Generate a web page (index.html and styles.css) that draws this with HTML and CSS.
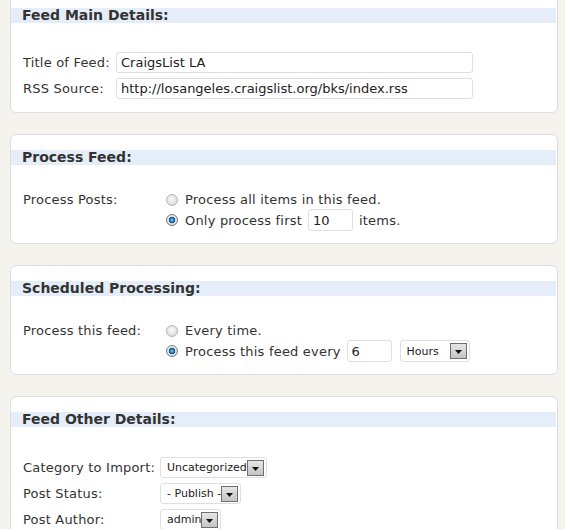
FILE: index.html
```html
<!DOCTYPE html>
<html>
<head>
<meta charset="utf-8">
<link rel="stylesheet" href="styles.css">
</head>
<body>
<div class="wrap">
  <div class="panel panel-first">
    <h3 class="band">Feed Main Details:</h3>
    <div class="rows rows-main gap-top-29">
      <div class="label">Title of Feed:</div>
      <div class="field"><input class="text wide" type="text" value="CraigsList LA"></div>
      <div class="label">RSS Source:</div>
      <div class="field"><input class="text wide" type="text" value="http://losangeles.craigslist.org/bks/index.rss"></div>
    </div>
  </div>

  <div class="panel panel-opts">
    <h3 class="band">Process Feed:</h3>
    <div class="rows rows-opts gap-top-25">
      <div class="label line1">Process Posts:</div>
      <div class="opts">
        <div class="opt line1"><input class="radio" type="radio" name="pp"><span>Process all items in this feed.</span></div>
        <div class="opt line2"><input class="radio" type="radio" name="pp" checked><span>Only process first</span><input class="text small" type="text" value="10"><span>items.</span></div>
      </div>
    </div>
  </div>

  <div class="panel panel-opts">
    <h3 class="band">Scheduled Processing:</h3>
    <div class="rows rows-opts gap-top-25">
      <div class="label line1">Process this feed:</div>
      <div class="opts">
        <div class="opt line1"><input class="radio" type="radio" name="sp"><span>Every time.</span></div>
        <div class="opt line2"><input class="radio" type="radio" name="sp" checked><span>Process this feed every</span><input class="text small" type="text" value="6"><span class="select sel-hours"><span class="sel-text">Hours</span><span class="sel-btn"><svg width="7" height="4" viewBox="0 0 7 4"><path d="M0 0h7L3.5 4z" fill="#111"/></svg></span></span></div>
      </div>
    </div>
  </div>

  <div class="panel">
    <h3 class="band">Feed Other Details:</h3>
    <div class="rows rows-other gap-top-30">
      <div class="label">Category to Import:</div>
      <div class="field"><span class="select"><span class="sel-text">Uncategorized</span><span class="sel-btn"><svg width="7" height="4" viewBox="0 0 7 4"><path d="M0 0h7L3.5 4z" fill="#111"/></svg></span></span></div>
      <div class="label">Post Status:</div>
      <div class="field"><span class="select"><span class="sel-text">- Publish -</span><span class="sel-btn"><svg width="7" height="4" viewBox="0 0 7 4"><path d="M0 0h7L3.5 4z" fill="#111"/></svg></span></span></div>
      <div class="label">Post Author:</div>
      <div class="field"><span class="select"><span class="sel-text">admin</span><span class="sel-btn"><svg width="7" height="4" viewBox="0 0 7 4"><path d="M0 0h7L3.5 4z" fill="#111"/></svg></span></span></div>
    </div>
  </div>
</div>
</body>
</html>
```

FILE: styles.css
```css
html, body {
  margin: 0;
  padding: 0;
  background: #f4f3ee;
  font-family: "DejaVu Sans", Verdana, sans-serif;
  font-size: 13px;
  color: #333;
}

.wrap {
  width: 548px;
  padding-left: 10px;
}

.panel {
  background: #fff;
  border: 1px solid #dedede;
  border-radius: 6px;
  padding: 15px 0 13px;
  margin-bottom: 21px;
}

.panel-first {
  margin-top: -8px;
}

.panel-opts {
  padding-bottom: 12px;
}

.band {
  margin: 0 1px 0 0;
  height: 15px;
  line-height: 15px;
  background: #e5eef8;
  font-size: 14px;
  font-weight: bold;
  color: #333;
  padding-left: 11px;
  white-space: nowrap;
}

.rows {
  display: grid;
  padding-left: 12px;
  align-items: center;
  letter-spacing: 0.2px;
}

.gap-top-25 { margin-top: 25px; }
.gap-top-29 { margin-top: 29px; }
.gap-top-30 { margin-top: 30px; }

.rows-main {
  grid-template-columns: 93px 1fr;
  row-gap: 5px;
}

.rows-other {
  grid-template-columns: 137px 1fr;
  row-gap: 5px;
}

.rows-opts {
  grid-template-columns: 143px 1fr;
  align-items: start;
}

.label {
  white-space: nowrap;
  line-height: 21px;
}

.rows-opts .label {
  line-height: 19px;
}

.field {
  display: flex;
  align-items: center;
}

.text {
  box-sizing: border-box;
  height: 21px;
  border: 1px solid #dfdfdf;
  border-radius: 3px;
  background: #fff;
  font-family: "DejaVu Sans", Verdana, sans-serif;
  font-size: 13px;
  letter-spacing: 0;
  color: #222;
  padding: 0 4px;
  margin: 0;
  outline: none;
}

.wide {
  width: 357px;
}

.small {
  width: 45px;
  height: 22px;
  margin: 0 6px 0 6px;
}

.opts {
  display: flex;
  flex-direction: column;
}

.opt {
  display: flex;
  align-items: center;
  white-space: nowrap;
}

.opt.line1 { height: 19px; }
.opt.line2 { height: 22px; }

.radio {
  appearance: none;
  -webkit-appearance: none;
  box-sizing: border-box;
  width: 12px;
  height: 12px;
  margin: 0 7px 0 0;
  border-radius: 50%;
  border: 1px solid #b4b4b4;
  background: radial-gradient(circle at 45% 40%, #fafafa 0%, #e4e4e4 55%, #cfcfcf 100%);
  flex: none;
}

.radio:checked {
  border-color: #7a7a7a;
  background:
    radial-gradient(circle at 50% 50%, #8ed0f5 0px, #1e74b4 2px, #0d4f86 3px, transparent 3.6px),
    radial-gradient(circle at 45% 40%, #fafafa 0%, #e2e2e2 60%, #c8c8c8 100%);
}

.select {
  box-sizing: border-box;
  display: inline-flex;
  align-items: center;
  height: 21px;
  border: 1px solid #dfdfdf;
  border-radius: 3px;
  background: #fff;
  padding: 0 2px 0 6px;
  font-size: 11px;
  letter-spacing: 0;
  color: #222;
}

.sel-hours {
  height: 22px;
  width: 70px;
  margin-left: 2px;
  padding-left: 6px;
  justify-content: space-between;
}

.sel-text {
  white-space: nowrap;
}

.sel-btn {
  box-sizing: border-box;
  width: 17px;
  height: 16px;
  border: 1px solid #6f6f6f;
  background: linear-gradient(#e6e6e6, #c4c4c4);
  display: flex;
  align-items: center;
  justify-content: center;
  padding-top: 2px;
}
```
